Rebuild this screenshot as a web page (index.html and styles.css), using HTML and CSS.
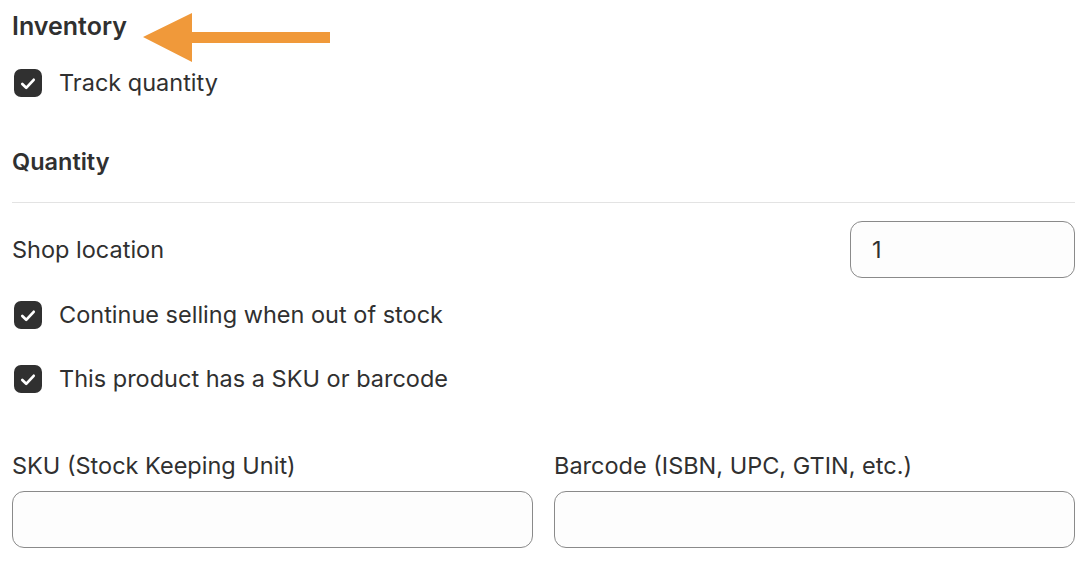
FILE: index.html
```html
<!DOCTYPE html>
<html>
<head>
<meta charset="utf-8">
<link rel="stylesheet" href="styles.css">
</head>
<body>
<div class="page">
  <div class="heading-row">
    <h2 class="heading main">Inventory</h2>
    <svg class="arrow" width="190" height="52" viewBox="0 0 190 52">
      <polygon points="1,24 50,0 50,19 188,19 188,30 50,30 50,49" fill="#F0993A"/>
    </svg>
  </div>
  <label class="check-row track">
    <span class="box"><svg width="28" height="28" viewBox="0 0 28 28"><path d="M8.3 15 L12.2 18.8 L19.7 10.8" fill="none" stroke="#fff" stroke-width="2.7" stroke-linecap="round" stroke-linejoin="round"/></svg></span>
    <span class="check-label">Track quantity</span>
  </label>
  <h3 class="heading sub">Quantity</h3>
  <div class="divider"></div>
  <div class="loc-row">
    <span class="loc-label">Shop location</span>
    <div class="input small">1</div>
  </div>
  <label class="check-row cont">
    <span class="box"><svg width="28" height="28" viewBox="0 0 28 28"><path d="M8.3 15 L12.2 18.8 L19.7 10.8" fill="none" stroke="#fff" stroke-width="2.7" stroke-linecap="round" stroke-linejoin="round"/></svg></span>
    <span class="check-label">Continue selling when out of stock</span>
  </label>
  <label class="check-row sku">
    <span class="box"><svg width="28" height="28" viewBox="0 0 28 28"><path d="M8.3 15 L12.2 18.8 L19.7 10.8" fill="none" stroke="#fff" stroke-width="2.7" stroke-linecap="round" stroke-linejoin="round"/></svg></span>
    <span class="check-label">This product has a SKU or barcode</span>
  </label>
  <div class="fields">
    <div class="field">
      <div class="field-label">SKU (Stock Keeping Unit)</div>
      <div class="input"></div>
    </div>
    <div class="field">
      <div class="field-label">Barcode (ISBN, UPC, GTIN, etc.)</div>
      <div class="input"></div>
    </div>
  </div>
</div>
</body>
</html>
```
FILE: styles.css
```css
html, body {
  margin: 0;
  padding: 0;
  background: #ffffff;
}
body {
  font-family: Inter, "Noto Sans", sans-serif;
  color: #303030;
}
.page {
  padding: 12px 13px 0 12px;
  display: flex;
  flex-direction: column;
}
.heading-row {
  position: relative;
  height: 28px;
}
.heading {
  margin: 0;
  font-size: 23.5px;
  font-weight: 600;
  line-height: 28px;
  color: #303030;
}
.heading.main { font-size: 25px; }
.arrow {
  position: absolute;
  left: 130px;
  top: 1px;
}
.check-row {
  display: flex;
  align-items: center;
  gap: 17px;
  height: 32px;
  padding-left: 2px;
}
.track { margin-top: 27px; }
.cont { margin-top: 21px; }
.sku { margin-top: 32px; }
.box {
  width: 28px;
  height: 28px;
  border-radius: 7px;
  background: #303030;
  display: flex;
}
.check-label, .loc-label, .field-label {
  font-size: 23.5px;
  line-height: 28px;
  color: #303030;
}
.sub { margin-top: 49px; }
.divider {
  margin-top: 26px;
  height: 1px;
  background: #e3e3e3;
}
.loc-row {
  margin-top: 18px;
  display: flex;
  justify-content: space-between;
  align-items: center;
}
.input {
  height: 57px;
  box-sizing: border-box;
  border: 1px solid #8a8a8a;
  border-radius: 12px;
  background: #fdfdfd;
  font-size: 23.5px;
  line-height: 55px;
  padding-left: 21px;
  color: #303030;
}
.input.small { width: 225px; }
.fields {
  margin-top: 57px;
  display: grid;
  grid-template-columns: 1fr 1fr;
  gap: 21px;
}
.field-label { margin-bottom: 11px; }
```
